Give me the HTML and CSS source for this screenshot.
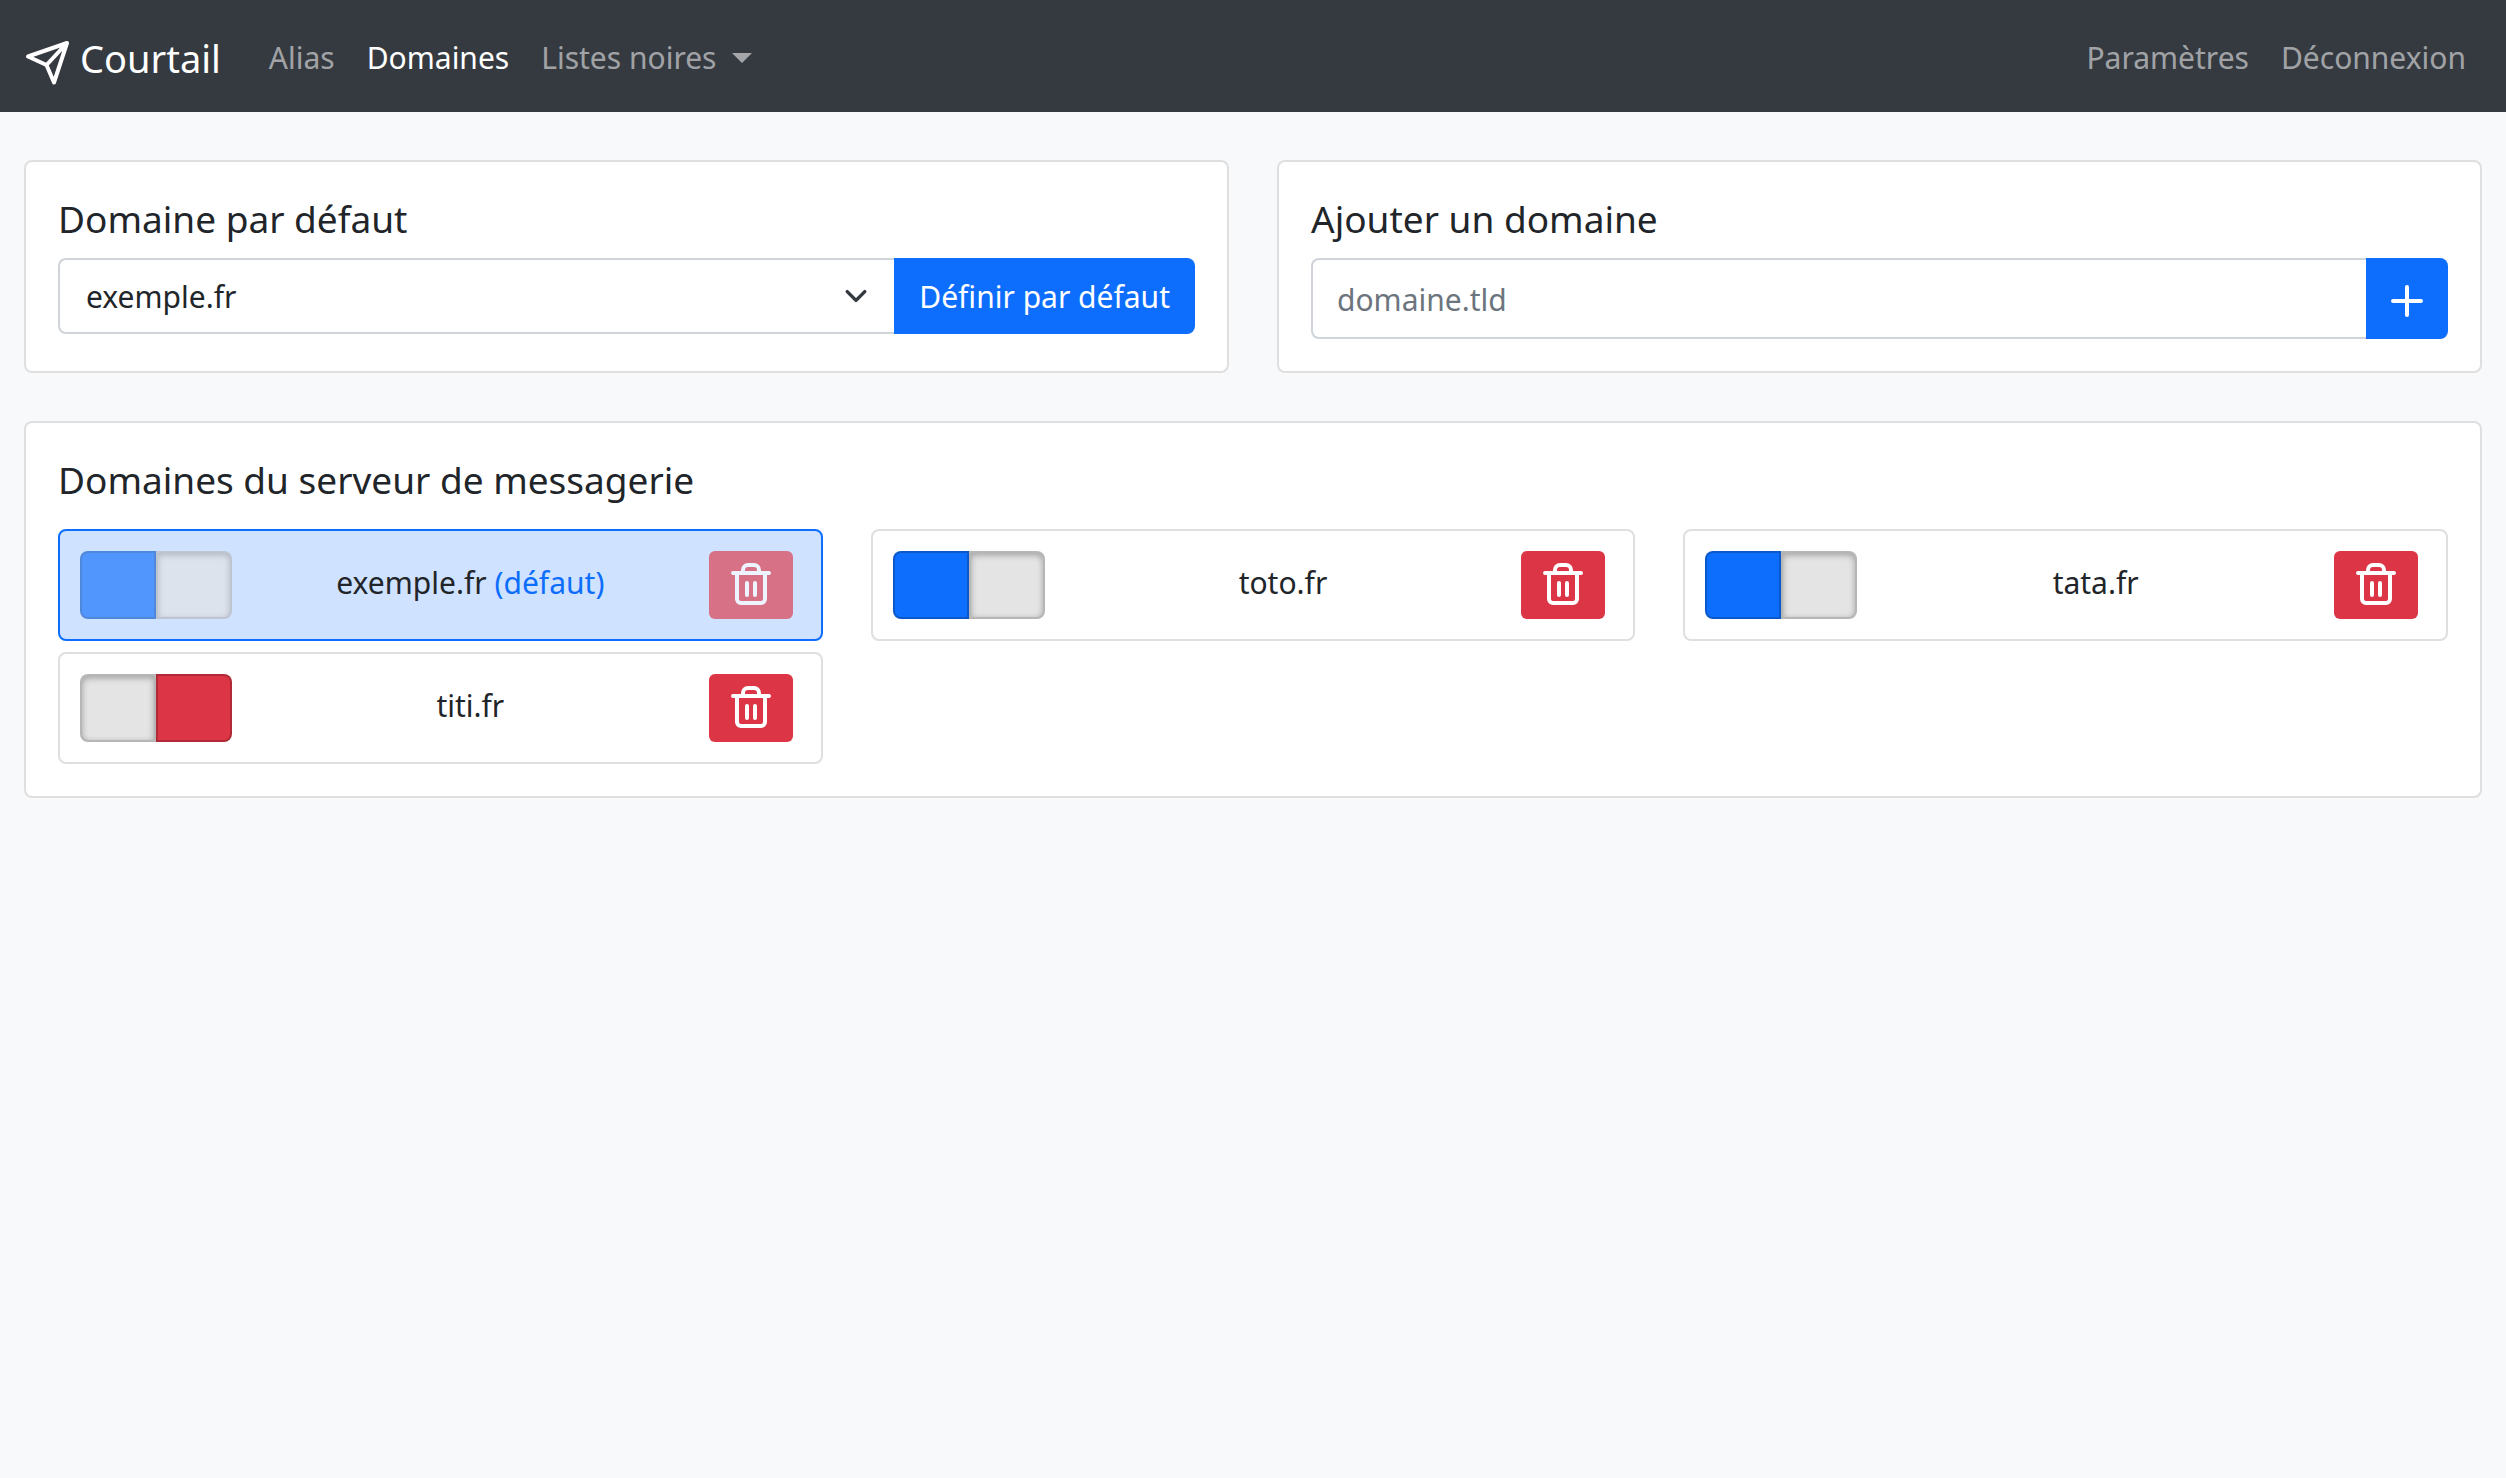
FILE: index.html
```
<!DOCTYPE html>
<html lang="fr">
<head>
<meta charset="utf-8">
<meta name="viewport" content="width=device-width, initial-scale=1">
<title>Courtail</title>
<link rel="stylesheet" href="styles.css">
</head>
<body>
<svg class="sprite" aria-hidden="true">
  <symbol id="trash" viewBox="0 0 48 48">
    <path d="M6 12H42M10 12V38a4 4 0 0 0 4 4H34a4 4 0 0 0 4-4V12M16 12V9a5 5 0 0 1 5-5H27a5 5 0 0 1 5 5V12M20 22V34M28 22V34"/>
  </symbol>
</svg>
<nav class="navbar">
  <a class="brand" href="#">
    <svg class="brand-icon" viewBox="0 0 48 48" aria-hidden="true"><path d="M43 5 4 18.500 22.500 27 30 44.500ZM22.500 27 43 5"/></svg>
    <span>Courtail</span>
  </a>
  <div class="nav-links">
    <a class="nav-link" href="#">Alias</a>
    <a class="nav-link active" href="#" aria-current="page">Domaines</a>
    <a class="nav-link dropdown" href="#">Listes noires</a>
  </div>
  <div class="nav-links end">
    <a class="nav-link" href="#">Paramètres</a>
    <a class="nav-link" href="#">Déconnexion</a>
  </div>
</nav>
<main class="content">
  <div class="forms">
    <form class="card">
      <h5><label for="default-domain">Domaine par défaut</label></h5>
      <div class="input-group">
        <select id="default-domain" class="field select">
          <option>exemple.fr</option>
          <option>toto.fr</option>
          <option>tata.fr</option>
        </select>
        <button class="btn" type="button">Définir par défaut</button>
      </div>
    </form>
    <form class="card">
      <h5><label for="new-domain">Ajouter un domaine</label></h5>
      <div class="input-group tall">
        <input id="new-domain" class="field" type="text" placeholder="domaine.tld">
        <button class="btn" type="button" aria-label="Ajouter"><svg class="plus" viewBox="0 0 32 40" aria-hidden="true"><path d="M2 21H30M16 7V35"/></svg></button>
      </div>
    </form>
  </div>
  <section class="card list">
    <h5>Domaines du serveur de messagerie</h5>
    <div class="domains">
      <div class="domain default">
        <div class="switch">
          <input type="radio" name="exemple" class="on" aria-label="Activer exemple.fr" checked disabled>
          <input type="radio" name="exemple" class="off" aria-label="Désactiver exemple.fr" disabled>
        </div>
        <span class="name">exemple.fr <span class="tag">(défaut)</span></span>
        <button class="delete" type="button" aria-label="Supprimer exemple.fr" disabled><svg aria-hidden="true"><use href="#trash"/></svg></button>
      </div>
      <div class="domain">
        <div class="switch">
          <input type="radio" name="toto" class="on" aria-label="Activer toto.fr" checked>
          <input type="radio" name="toto" class="off" aria-label="Désactiver toto.fr">
        </div>
        <span class="name">toto.fr</span>
        <button class="delete" type="button" aria-label="Supprimer toto.fr"><svg aria-hidden="true"><use href="#trash"/></svg></button>
      </div>
      <div class="domain">
        <div class="switch">
          <input type="radio" name="tata" class="on" aria-label="Activer tata.fr" checked>
          <input type="radio" name="tata" class="off" aria-label="Désactiver tata.fr">
        </div>
        <span class="name">tata.fr</span>
        <button class="delete" type="button" aria-label="Supprimer tata.fr"><svg aria-hidden="true"><use href="#trash"/></svg></button>
      </div>
      <div class="domain">
        <div class="switch">
          <input type="radio" name="titi" class="on" aria-label="Activer titi.fr">
          <input type="radio" name="titi" class="off" aria-label="Désactiver titi.fr" checked>
        </div>
        <span class="name">titi.fr</span>
        <button class="delete" type="button" aria-label="Supprimer titi.fr"><svg aria-hidden="true"><use href="#trash"/></svg></button>
      </div>
    </div>
  </section>
</main>
</body>
</html>
```
FILE: styles.css
```
*, *::before, *::after { box-sizing: border-box; }
body {
  margin: 0;
  background: #f8f9fb;
  color: #212529;
  font: 30px/48px "Noto Sans", sans-serif;
}
input, select, button { margin: 0; font: inherit; }
a { text-decoration: none; }
svg { display: block; fill: none; stroke: currentColor; stroke-width: 4; stroke-linecap: round; stroke-linejoin: round; }
.sprite { display: none; }

/* Navigation */
.navbar {
  display: flex;
  align-items: center;
  padding: 30px 24px 26px;
  background: #353a41;
}
.brand {
  display: flex;
  align-items: flex-end;
  gap: 8px;
  margin-right: 32px;
  color: #fff;
  font-size: 38px;
  line-height: 56px;
}
.brand-icon { width: 48px; height: 48px; }
.nav-links { display: flex; }
.nav-links.end { margin-left: auto; }
.nav-link { padding: 0 16px; color: rgba(255, 255, 255, .55); }
.nav-link.active { color: #fff; }
.dropdown { display: flex; align-items: center; gap: 16px; }
.dropdown::after {
  content: "";
  border: 10px solid transparent;
  border-top-color: currentColor;
  border-bottom: 0;
}

/* Cards */
.content { display: grid; gap: 48px; padding: 48px 24px; }
.forms { display: grid; grid-template-columns: 1fr 1fr; gap: 48px; }
.card {
  min-width: 0;
  padding: 32px;
  background: #fff;
  border: 2px solid #dfdfdf;
  border-radius: 8px;
}
h5 { margin: 0 0 14px; font-size: 37px; font-weight: 400; line-height: 50px; }
.list h5 { margin-bottom: 24px; }

/* Forms */
.input-group { display: flex; height: 76px; }
.input-group.tall { height: 81px; }
.field {
  flex: 1;
  min-width: 0;
  padding: 2px 24px 0;
  color: #212529;
  background: #fff;
  border: 2px solid #ced4da;
  border-right: 0;
  border-radius: 8px 0 0 8px;
}
.field::placeholder { color: #6c757d; opacity: 1; }
.select {
  appearance: none;
  padding: 2px 72px 0 26px;
  background: #fff url("data:image/svg+xml,%3Csvg xmlns='http://www.w3.org/2000/svg' viewBox='0 0 16 16'%3E%3Cpath fill='none' stroke='%23343a40' stroke-linecap='round' stroke-linejoin='round' stroke-width='2' d='M3 5.500l5 5 5-5'/%3E%3C/svg%3E") no-repeat right 24px center / 28px 28px;
}
.btn {
  display: flex;
  align-items: center;
  padding: 2px 25px 0;
  color: #fff;
  background: #0d6efd;
  border: 0;
  border-radius: 0 8px 8px 0;
}
.plus { width: 32px; height: 40px; }

/* Domain list */
.domains { display: grid; grid-template-columns: repeat(3, 1fr); gap: 11px 48px; }
.domain {
  display: flex;
  padding: 20px 28px 20px 20px;
  border: 2px solid #dfdfdf;
  border-radius: 8px;
}
.domain.default { background: #cfe2ff; border-color: #0d6efd; }
.name { flex: 1; line-height: 64px; text-align: center; }
.tag { color: #0d6efd; }
.switch { display: flex; }
.switch input {
  appearance: none;
  width: 76px;
  height: 68px;
  background: #e4e4e4;
  border: 2px solid rgba(0, 0, 0, .2);
  box-shadow: inset 0 2px 6px rgba(0, 0, 0, .3);
}
.switch .on { border-radius: 8px 0 0 8px; }
.switch .off { border-radius: 0 8px 8px 0; }
.switch input:checked { box-shadow: none; }
.switch .on:checked { background: #0d6efd; }
.switch .off:checked { background: #dc3545; }
.switch input:disabled, .delete:disabled { opacity: .65; }
.delete {
  height: 68px;
  padding: 0 18px;
  color: #fff;
  background: #dc3545;
  border: 0;
  border-radius: 6px;
}
.delete svg { width: 48px; height: 48px; }
```
